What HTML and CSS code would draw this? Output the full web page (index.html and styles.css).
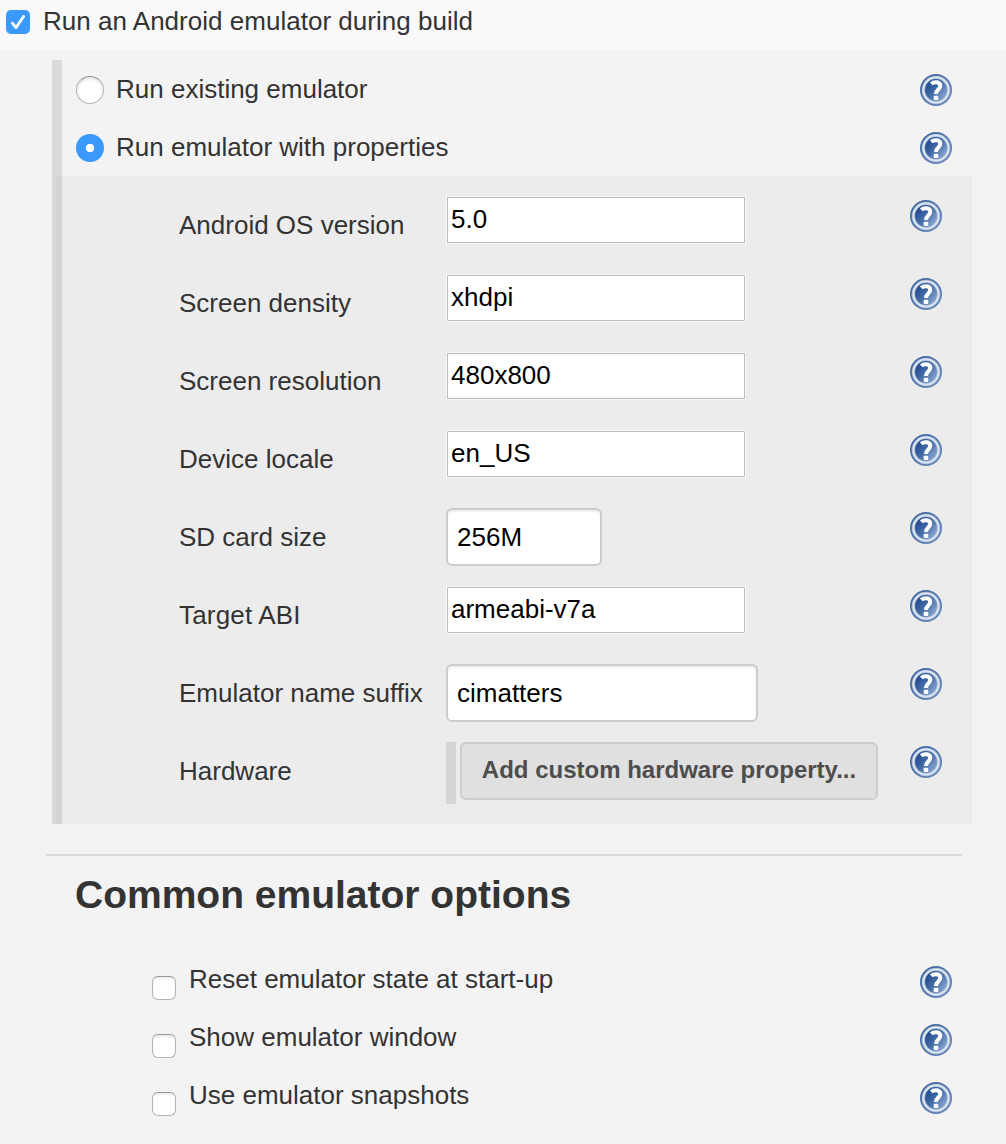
FILE: index.html
```
<!DOCTYPE html>
<html lang="en">
<head>
<meta charset="utf-8">
<title>Android emulator settings</title>
<link rel="stylesheet" href="styles.css">
</head>
<body>
<svg class="defs" aria-hidden="true">
  <defs>
    <linearGradient id="help-fill" x1="0" y1="0.1" x2="1" y2="0.9">
      <stop offset="0.1" stop-color="#1c468a"/>
      <stop offset="0.45" stop-color="#3f68a4"/>
      <stop offset="1" stop-color="#a0b8dc"/>
    </linearGradient>
    <linearGradient id="help-ring" x1="0" y1="0" x2="1" y2="1">
      <stop offset="0" stop-color="#3a609b"/>
      <stop offset="1" stop-color="#6f8dbc"/>
    </linearGradient>
    <symbol id="help" viewBox="0 0 32 32">
      <circle cx="16" cy="16" r="16" fill="url(#help-ring)"/>
      <circle cx="16" cy="16" r="12.6" fill="url(#help-fill)" stroke="#9fb5d4" stroke-width="3.4"/>
      <circle cx="16" cy="16" r="12.6" fill="none" stroke="#dde6f1" stroke-width="1.8"/>
      <path d="M11.3 9.8C13.5 7.6 20.3 7.3 20.3 11.8C20.3 15.6 16 15.4 16 20" fill="none" stroke="#fff" stroke-width="4"/>
      <rect x="13.7" y="21.7" width="4.6" height="4.4" rx="1" fill="#fff"/>
    </symbol>
  </defs>
</svg>
<header class="top">
  <span class="check checked"><svg viewBox="0 0 24 24"><path d="M6.4 13.2L10 17.6L17.6 6.5" fill="none" stroke="#fff" stroke-width="2.8" stroke-linecap="round" stroke-linejoin="round"/></svg></span>
  <span class="top-label">Run an Android emulator during build</span>
</header>
<main>
  <section class="panel">
    <div class="choice"><span class="radio"></span><span class="choice-label">Run existing emulator</span><svg class="help"><use href="#help"/></svg></div>
    <div class="choice"><span class="radio selected"></span><span class="choice-label">Run emulator with properties</span><svg class="help"><use href="#help"/></svg></div>
    <div class="properties">
      <div class="row"><span class="name">Android OS version</span><div class="field"><div class="combo">5.0</div></div><svg class="help"><use href="#help"/></svg></div>
      <div class="row"><span class="name">Screen density</span><div class="field"><div class="combo">xhdpi</div></div><svg class="help"><use href="#help"/></svg></div>
      <div class="row"><span class="name">Screen resolution</span><div class="field"><div class="combo">480x800</div></div><svg class="help"><use href="#help"/></svg></div>
      <div class="row"><span class="name">Device locale</span><div class="field"><div class="combo">en_US</div></div><svg class="help"><use href="#help"/></svg></div>
      <div class="row"><span class="name">SD card size</span><div class="field"><div class="text short">256M</div></div><svg class="help"><use href="#help"/></svg></div>
      <div class="row"><span class="name spaced">Target ABI</span><div class="field"><div class="combo">armeabi-v7a</div></div><svg class="help"><use href="#help"/></svg></div>
      <div class="row"><span class="name">Emulator name suffix</span><div class="field"><div class="text">cimatters</div></div><svg class="help"><use href="#help"/></svg></div>
      <div class="row"><span class="name">Hardware</span><div class="field"><div class="hardware"><button class="add">Add custom hardware property...</button></div></div><svg class="help"><use href="#help"/></svg></div>
    </div>
  </section>
  <section class="common">
    <h2>Common emulator options</h2>
    <div class="option"><span class="check"></span><span class="option-label">Reset emulator state at start-up</span><svg class="help"><use href="#help"/></svg></div>
    <div class="option"><span class="check"></span><span class="option-label">Show emulator window</span><svg class="help"><use href="#help"/></svg></div>
    <div class="option"><span class="check"></span><span class="option-label">Use emulator snapshots</span><svg class="help"><use href="#help"/></svg></div>
  </section>
</main>
</body>
</html>
```
FILE: styles.css
```
* { box-sizing: border-box; }
body {
  margin: 0;
  height: 1144px;
  overflow: hidden;
  background: #f3f3f3;
  color: #333;
  font: 26px/30px "Liberation Sans", Arial, sans-serif;
}
.defs { position: absolute; width: 0; height: 0; }
.top {
  display: flex;
  height: 50px;
  padding: 6px 0 0 6px;
  background: #f9f9f9;
}
.check {
  flex: none;
  width: 24px;
  height: 24px;
  border: 1px solid #b4b4b4;
  border-top-color: #999;
  border-radius: 6px;
  background: #fff;
  box-shadow: inset 0 2px 2px #eee;
}
.checked {
  margin-top: 4px;
  border: 0;
  border-radius: 5px;
  background: #3b99fc;
  box-shadow: none;
}
.checked svg { display: block; }
.top-label { margin-left: 13px; letter-spacing: 0.02px; }
.help { flex: none; width: 32px; height: 32px; margin: 14px 0 0 auto; }
.panel {
  width: 920px;
  margin: 10px 0 0 52px;
  background: linear-gradient(to right, #dadada 10px, transparent 10px);
}
.choice { display: flex; height: 58px; padding: 0 20px 0 24px; }
.radio {
  flex: none;
  width: 28px;
  height: 28px;
  margin-top: 16px;
  border: 1px solid #b4b4b4;
  border-top-color: #999;
  border-radius: 50%;
  background: #fff;
  box-shadow: inset 0 2px 3px #e4e4e4;
}
.selected {
  border: 0;
  background: radial-gradient(circle, #fff 3.8px, #3b99fc 4.6px);
  box-shadow: none;
}
.choice-label { margin: 14px 0 0 12px; }
.properties {
  height: 648px;
  margin-left: 4px;
  padding: 10px 30px 0 123px;
  background: rgba(0, 0, 0, 0.027);
}
.row { display: flex; height: 78px; }
.name { width: 267px; padding-top: 24px; white-space: nowrap; }
.spaced { letter-spacing: 0.18px; }
.field { padding-top: 10px; color: #000; }
.combo {
  width: 300px;
  height: 48px;
  padding: 7px 4px;
  border: 1px solid #f9f9f9;
  outline: 1px solid #bbb;
  outline-offset: -2px;
  background: #fff;
}
.text {
  width: 312px;
  height: 58px;
  padding: 12px 9px;
  border: 2px solid #ccc;
  border-radius: 6px;
  background: #fff;
  box-shadow: inset 0 2px 2px #eee;
}
.short { width: 156px; }
.hardware { height: 62px; padding-left: 4px; border-left: 10px solid #d5d5d5; }
.add {
  display: block;
  width: 418px;
  height: 58px;
  padding: 0 0 2px;
  border: 2px solid #ccc;
  border-radius: 6px;
  background: #e0e0e0;
  color: #4d4d4d;
  font: bold 24px/28px "Liberation Sans", Arial, sans-serif;
  white-space: nowrap;
}
.common {
  width: 916px;
  margin: 30px 0 0 46px;
  border-top: 2px solid #dadada;
}
h2 {
  height: 96px;
  margin: 0;
  padding: 16px 0 0 29px;
  font-size: 39px;
  line-height: 46px;
}
.option { display: flex; height: 58px; padding: 0 10px 0 106px; }
.option .check { margin-top: 24px; }
.option-label { margin: 12px 0 0 13px; }
```
